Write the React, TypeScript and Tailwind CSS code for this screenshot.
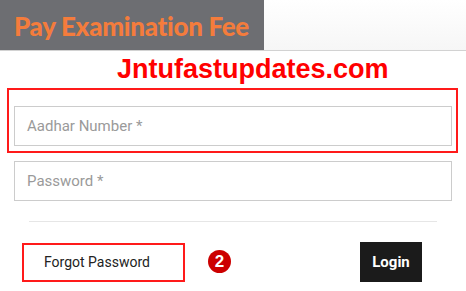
export default function App() {
  return (
    <div className="relative h-[291px] w-[466px] overflow-hidden bg-white font-['Roboto',sans-serif]">
      <div className="flex h-[51px] border-b border-[#d2d2d2] bg-gradient-to-b from-white to-[#f6f6f6]">
        <div className="flex h-[50px] w-[264px] items-center bg-[#6d6e72] pl-[14px] pt-[2px]">
          <span className="font-['Lato',sans-serif] text-[26px] font-black leading-none tracking-[-0.3px] text-[#f47c3c]">Pay Examination Fee</span>
        </div>
      </div>

      <div className="mt-[3px] pl-[117px] font-['Liberation_Sans',Arial,sans-serif] text-[27px] font-bold leading-[30px] text-[#ff0000]">
        Jntufastupdates.com
      </div>

      <div className="ml-[7px] mt-[4px] h-[65px] w-[451px] border-2 border-[#ff1a1a] pl-[5px] pt-[16px]">
        <div className="flex h-[40px] w-[438px] items-center border border-[#cccccc] pl-[12px] text-[15px] text-[#9a9a9a]">
          Aadhar Number *
        </div>
      </div>

      <div className="ml-[14px] mt-[8px] flex h-[40px] w-[438px] items-center border border-[#cccccc] pl-[12px] text-[15px] text-[#9a9a9a]">
        Password *
      </div>

      <div className="ml-[29px] mt-[20px] h-px w-[408px] bg-[#e6e6e6]" />

      <div className="mt-[20px] flex h-[40px] items-center">
        <div className="ml-[22px] flex h-[39px] w-[163px] items-center border-2 border-[#ff1a1a] pl-[20px] text-[14px] text-[#222222]">
          Forgot Password
        </div>
        <div className="ml-[23px] mt-[-2px] flex h-[23px] w-[23px] items-center justify-center rounded-full bg-[#cc0000] font-['Liberation_Sans',Arial,sans-serif] text-[17px] font-bold leading-none text-white">
          2
        </div>
        <div className="ml-[129px] flex h-[40px] w-[62px] items-center justify-center bg-[#1b1b1b] text-[15px] font-bold text-white">
          Login
        </div>
      </div>
    </div>
  );
}
